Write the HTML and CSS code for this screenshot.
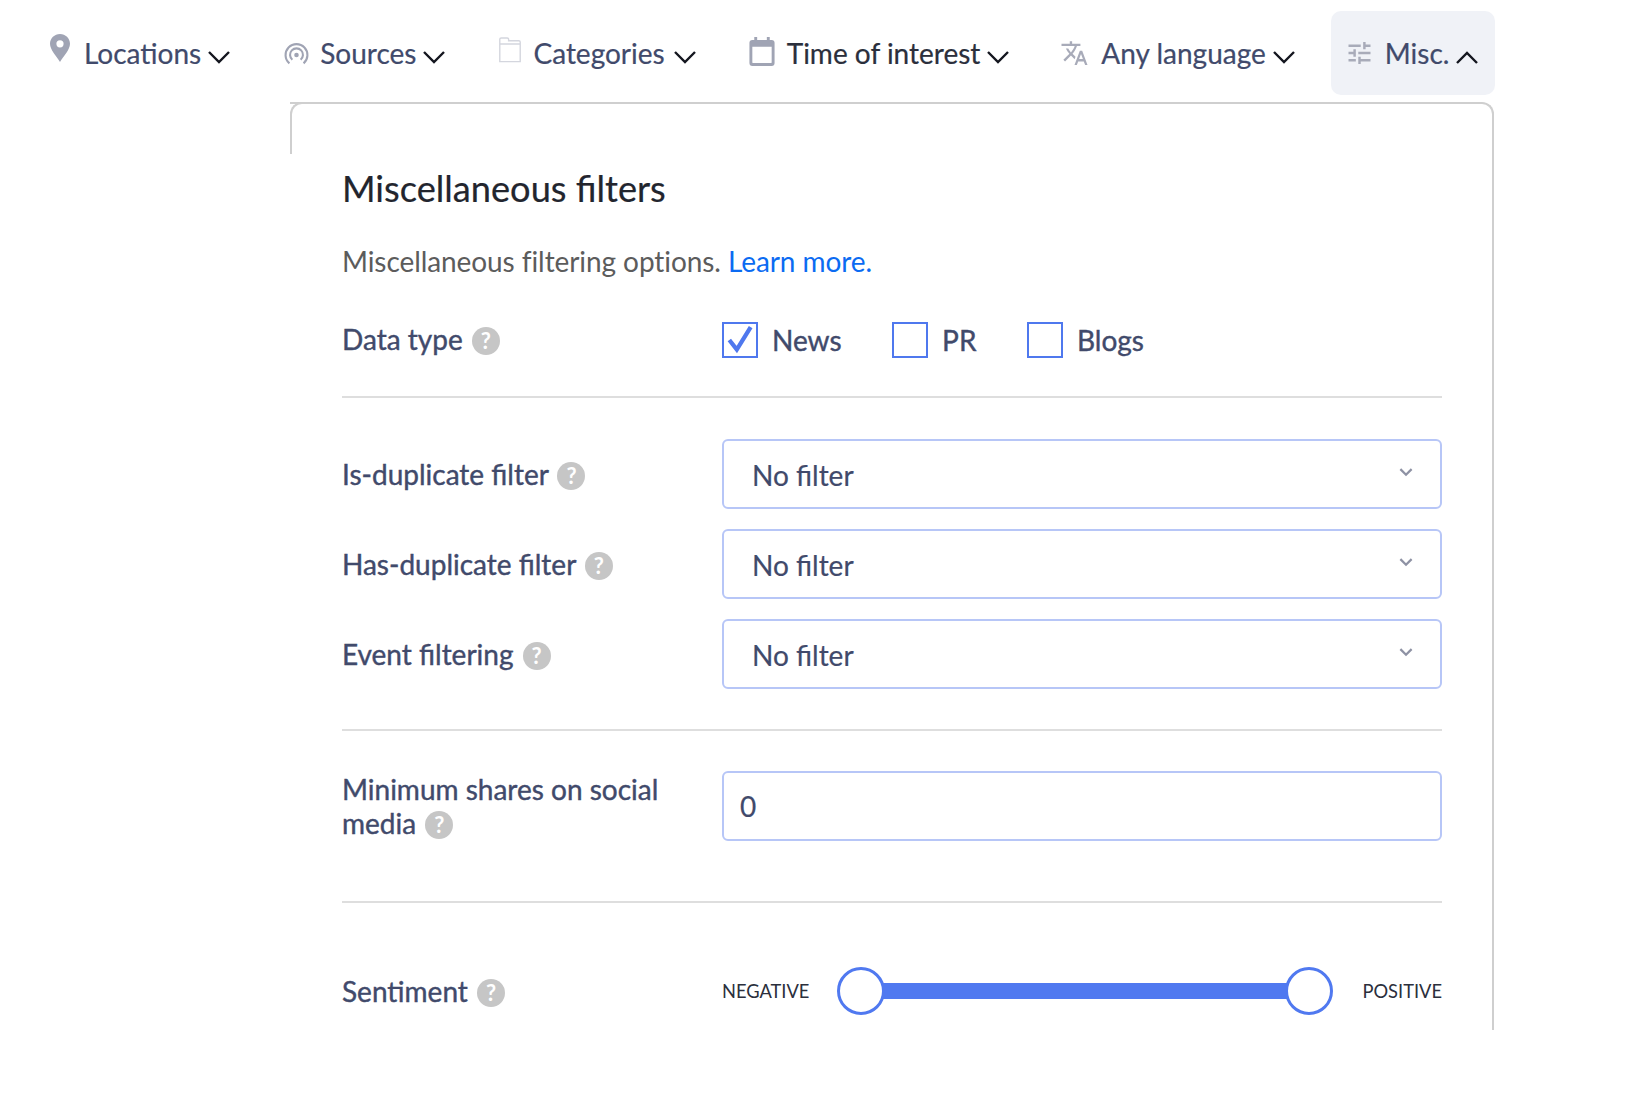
FILE: index.html
```html
<!DOCTYPE html>
<html>
<head>
    <title>Misc filters</title>
    <link rel="stylesheet" href="styles.css">
</head>

<body>
    <div class="filter-bar">
        <div class="filter-tab">
            <svg class="tab-icon pin-icon" viewBox="0 0 20 28"><path fill-rule="evenodd" d="M10 0C4.5 0 0 4.4 0 9.8 0 16 6.5 22 10 28c3.500-6 10-12 10-18.200C20 4.400 15.500 0 10 0zm0 6.200a3.600 3.600 0 1 1 0 7.200 3.600 3.600 0 0 1 0-7.200z"/></svg>
            <span>Locations</span>
            <svg class="chevron" viewBox="0 0 24 14"><path d="M2 2l10 10L22 2"/></svg>
        </div>
        <div class="filter-tab">
            <svg class="tab-icon sources-icon" viewBox="0 0 24 24"><g fill="none" stroke="#a0a4b4" stroke-width="2"><path d="M5.200 21.500a10.500 10.500 0 1 1 13.600 0"/><path d="M8 18a6.200 6.200 0 1 1 8 0"/></g><circle cx="12" cy="13.500" r="2.200" fill="#a0a4b4"/></svg>
            <span>Sources</span>
            <svg class="chevron" viewBox="0 0 24 14"><path d="M2 2l10 10L22 2"/></svg>
        </div>
        <div class="filter-tab tab-categories">
            <svg class="tab-icon folder-icon" viewBox="0 0 24 28"><path d="M1 26.500V2.500Q1 1 2.500 1h6.500Q10.500 1 10.500 2.500V4h11Q23 4 23 5.500v21zM1 7.500h22" fill="none" stroke="#d4d6de" stroke-width="1.500"/></svg>
            <span>Categories</span>
            <svg class="chevron" viewBox="0 0 24 14"><path d="M2 2l10 10L22 2"/></svg>
        </div>
        <div class="filter-tab tab-dark">
            <svg class="tab-icon calendar-icon" viewBox="0 0 26 30"><path fill-rule="evenodd" d="M5 0h3v3h10V0h3v3h2q3 0 3 3v21q0 3-3 3H3q-3 0-3-3V6q0-3 3-3h2zM3 10v16.500q0 .5.500.5h19q.500 0 .500-.500V10z"/></svg>
            <span>Time of interest</span>
            <svg class="chevron" viewBox="0 0 24 14"><path d="M2 2l10 10L22 2"/></svg>
        </div>
        <div class="filter-tab tab-language">
            <svg class="tab-icon translate-icon" viewBox="0 0 24 22"><path d="M12.870 15.070l-2.540-2.510.03-.03c1.740-1.940 2.980-4.170 3.710-6.530H17V4h-7V2H8v2H1v1.990h11.170C11.500 7.920 10.440 9.750 9 11.350 8.070 10.320 7.300 9.190 6.690 8h-2c.73 1.630 1.730 3.170 2.980 4.560l-5.090 5.020L4 19l5-5 3.110 3.110.76-2.040zM18.500 10h-2L12 22h2l1.120-3h4.750L21 22h2l-4.500-12zm-2.620 7l1.620-4.330L19.120 17h-3.240z"/></svg>
            <span>Any language</span>
            <svg class="chevron" viewBox="0 0 24 14"><path d="M2 2l10 10L22 2"/></svg>
        </div>
        <div class="filter-tab tab-active">
            <svg class="tab-icon tune-icon" viewBox="3 3 18 18"><path d="M3 17v2h6v-2H3zM3 5v2h10V5H3zm10 16v-2h8v-2h-8v-2h-2v6h2zM7 9v2H3v2h4v2h2V9H7zm14 4v-2H11v2h10zm-6-4h2V7h4V5h-4V3h-2v6z"/></svg>
            <span>Misc.</span>
            <svg class="chevron chevron-up" viewBox="0 0 24 14"><path d="M2 12L12 2l10 10"/></svg>
        </div>
    </div>

    <div class="panel">
        <h2 class="panel-title">Miscellaneous filters</h2>
        <p class="panel-intro">Miscellaneous filtering options. <a href="#">Learn more.</a></p>

        <div class="form-row type-row">
            <div class="form-label">Data type <span class="help">?</span></div>
            <div class="checks">
                <label class="check-item"><span class="check-box">
                    <svg viewBox="0 0 30 30"><path d="M5 15l7 9L25 3"/></svg>
                </span>News</label>
                <label class="check-item"><span class="check-box"></span>PR</label>
                <label class="check-item"><span class="check-box"></span>Blogs</label>
            </div>
        </div>

        <hr class="divider">

        <div class="select-rows">
            <div class="form-row">
                <div class="form-label">Is-duplicate filter <span class="help">?</span></div>
                <div class="select-box">No filter
                    <svg viewBox="0 0 12 8"><path d="M1 1l5 5 5-5"/></svg>
                </div>
            </div>
            <div class="form-row">
                <div class="form-label">Has-duplicate filter <span class="help">?</span></div>
                <div class="select-box">No filter
                    <svg viewBox="0 0 12 8"><path d="M1 1l5 5 5-5"/></svg>
                </div>
            </div>
            <div class="form-row">
                <div class="form-label">Event filtering <span class="help">?</span></div>
                <div class="select-box">No filter
                    <svg viewBox="0 0 12 8"><path d="M1 1l5 5 5-5"/></svg>
                </div>
            </div>
        </div>

        <hr class="divider">

        <div class="form-row">
            <div class="form-label">Minimum shares on social media <span class="help">?</span></div>
            <input class="text-input" type="text" value="0">
        </div>

        <hr class="divider shares-divider">

        <div class="form-row sentiment-row">
            <div class="form-label">Sentiment <span class="help">?</span></div>
            <div class="sentiment">
                <span class="end-label">NEGATIVE</span>
                <div class="slider">
                    <div class="slider-track"></div>
                    <span class="handle handle-left"></span>
                    <span class="handle handle-right"></span>
                </div>
                <span class="end-label">POSITIVE</span>
            </div>
        </div>
    </div>
</body>
</html>
```

FILE: styles.css
```css
* {
    box-sizing: border-box;
    margin: 0;
    padding: 0;
}

body {
    font-family: Lato, sans-serif;
    color: #414a6b;
    background: #fff;
}

.filter-bar {
    display: flex;
    gap: 22px;
    padding: 11px 0 0 34px;
    margin-bottom: 7px;
}

.filter-tab {
    display: flex;
    align-items: center;
    height: 84px;
    padding: 0 14px 0 16px;
    border-radius: 10px;
    font-size: 28px;
    -webkit-text-stroke: 0.2px;
}
.tab-dark {
    color: #2b2f3c;
}
.tab-active {
    padding-right: 16px;
    background: #f0f2f7;
}
.tab-language {
    padding-right: 13px;
}
.tab-categories .chevron {
    margin-left: 8px;
}

.tab-icon {
    width: 23px;
    height: 23px;
    margin-right: 13px;
    fill: #a0a4b4;
}
.pin-icon {
    width: 20px;
    height: 28px;
    margin: -10px 14px 0 0;
}
.sources-icon {
    width: 25px;
    height: 25px;
    margin: 0 11px 0 1px;
}
.folder-icon {
    width: 24px;
    height: 26px;
    margin: -6px 11px 0 0;
}
.calendar-icon {
    width: 26px;
    height: 29px;
    margin: -4px 12px 0 0;
}
.translate-icon {
    width: 29px;
    height: 26px;
    margin: -2px 12px 0 -2px;
    fill: #a8abb9;
}
.tune-icon {
    width: 25px;
    height: 22px;
    margin-right: 13px;
    fill: #a8abb9;
}

.chevron {
    width: 24px;
    height: 14px;
    margin: 7px 0 0 6px;
    fill: none;
    stroke: #14161f;
    stroke-width: 2.400;
}
.chevron-up {
    margin-top: 9px;
}

.panel {
    position: relative;
    width: 1204px;
    height: 928px;
    margin-left: 290px;
    padding: 62px 50px 0 52px;
    border-top: 2px solid #cfcfcf;
    border-right: 2px solid #cfcfcf;
    border-top-right-radius: 12px;
}
.panel::before {
    content: '';
    position: absolute;
    left: 0;
    top: -2px;
    width: 24px;
    height: 50px;
    border-left: 2px solid #cfcfcf;
    border-top: 2px solid #cfcfcf;
    border-top-left-radius: 12px;
}

.panel-title {
    font-size: 36.200px;
    font-weight: 400;
    line-height: 44px;
    color: #22252e;
    -webkit-text-stroke: 0.2px;
}
.panel-intro {
    margin-top: 33px;
    font-size: 28px;
    line-height: 36px;
    letter-spacing: -0.08px;
    color: #5c5c5c;
}
.panel-intro a {
    color: #0b6bf2;
    text-decoration: none;
}

.form-row {
    display: flex;
    align-items: center;
}
.type-row {
    height: 36px;
    margin-top: 43px;
}
.form-label {
    flex: 0 0 380px;
    padding-right: 40px;
    font-size: 28px;
    line-height: 34px;
    -webkit-text-stroke: 0.4px;
}
.type-row .form-label {
    margin-top: -2px;
}

.help {
    display: inline-block;
    width: 28px;
    height: 28px;
    margin-left: 2px;
    border-radius: 50%;
    background: #c6c6c6;
    color: #fff;
    font-size: 22px;
    font-weight: 700;
    line-height: 28px;
    text-align: center;
    vertical-align: 1px;
    -webkit-text-stroke: 0;
}

.checks {
    display: flex;
    gap: 50.500px;
}
.check-item {
    display: flex;
    align-items: center;
    gap: 14px;
    font-size: 28px;
    -webkit-text-stroke: 0.4px;
}
.check-box {
    width: 36px;
    height: 36px;
    border: 2px solid #4f78ee;
}
.check-box svg {
    display: block;
    width: 32px;
    height: 32px;
    fill: none;
    stroke: #4f78ee;
    stroke-width: 4;
}

.divider {
    border: 0;
    border-top: 2px solid #dedede;
    margin: 38px 0 41px;
}
.select-rows + .divider {
    margin: 40px 0;
}
.shares-divider {
    margin: 60px 0 0;
}

.select-rows {
    display: flex;
    flex-direction: column;
    gap: 20px;
}
.select-box {
    display: flex;
    align-items: center;
    justify-content: space-between;
    flex: 1;
    height: 70px;
    padding: 2px 27px 0 28px;
    border: 2px solid #b7c6f7;
    border-radius: 6px;
    font-size: 28px;
    -webkit-text-stroke: 0.2px;
}
.select-box svg {
    width: 14px;
    height: 9px;
    margin: -6px 0 0;
    fill: none;
    stroke: #8e92a4;
    stroke-width: 2;
}

.text-input {
    flex: 1;
    height: 70px;
    padding: 0 16px;
    border: 2px solid #b7c6f7;
    border-radius: 6px;
    font-family: Lato, sans-serif;
    font-size: 28px;
    color: #414a6b;
    -webkit-text-stroke: 0.2px;
}

.sentiment-row {
    margin-top: 64px;
}
.sentiment {
    display: flex;
    flex: 1;
    align-items: center;
    justify-content: space-between;
}
.end-label {
    font-size: 18.300px;
    color: #2b2f3c;
}
.slider {
    position: relative;
    display: flex;
    align-items: center;
    width: 496px;
    height: 48px;
    margin-right: 2px;
}
.slider-track {
    flex: 1;
    height: 16px;
    margin: 0 23px;
    background: #5079f0;
}
.handle {
    position: absolute;
    top: 0;
    width: 48px;
    height: 48px;
    border: 3px solid #5079f0;
    border-radius: 50%;
    background: #fff;
}
.handle-left {
    left: 0;
}
.handle-right {
    right: 0;
}
```
